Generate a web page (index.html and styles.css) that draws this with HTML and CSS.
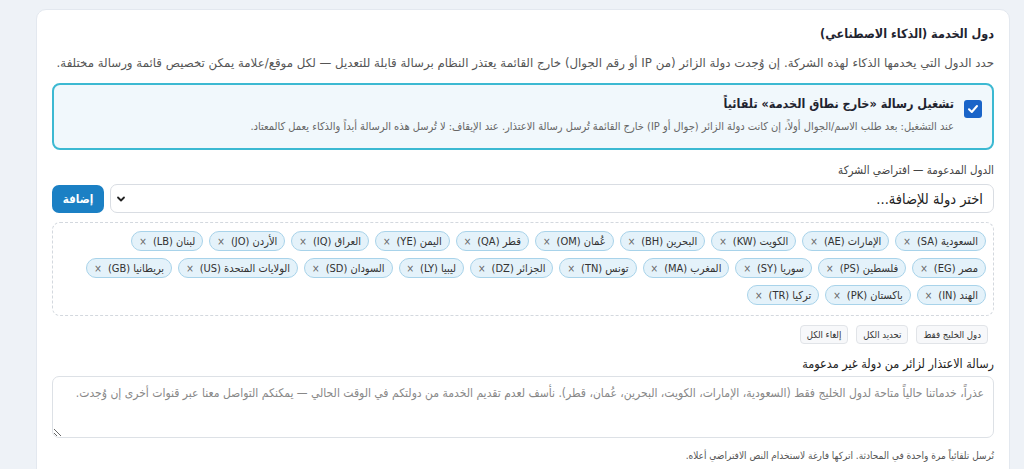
FILE: index.html
```html
<!DOCTYPE html>
<html lang="ar" dir="rtl">
<head>
    <meta charset="UTF-8">
    <meta name="viewport" content="width=device-width, initial-scale=1.0">
    <title>دول الخدمة</title>
    <link rel="stylesheet" href="styles.css">
</head>
<body>
    <div class="card">
        <h2>دول الخدمة (الذكاء الاصطناعي)</h2>
        <p class="desc">حدد الدول التي يخدمها الذكاء لهذه الشركة. إن وُجدت دولة الزائر (من IP أو رقم الجوال) خارج القائمة يعتذر النظام برسالة قابلة للتعديل — لكل موقع/علامة يمكن تخصيص قائمة ورسالة مختلفة.</p>

        <div class="toggle-box">
            <span class="check">
                <svg width="12" height="12" viewBox="0 0 12 12"><path d="M2 6.3 L4.8 9 L10 3" fill="none" stroke="#fff" stroke-width="2" stroke-linecap="round" stroke-linejoin="round"/></svg>
            </span>
            <div>
                <div class="toggle-title">تشغيل رسالة «خارج نطاق الخدمة» تلقائياً</div>
                <div class="toggle-sub">عند التشغيل: بعد طلب الاسم/الجوال أولاً، إن كانت دولة الزائر (جوال أو IP) خارج القائمة تُرسل رسالة الاعتذار. عند الإيقاف: لا تُرسل هذه الرسالة أبداً والذكاء يعمل كالمعتاد.</div>
            </div>
        </div>

        <div class="label">الدول المدعومة — افتراضي الشركة</div>
        <div class="add-row">
            <div class="select">
                <span>اختر دولة للإضافة...</span>
                <svg width="10" height="10" viewBox="0 0 10 10"><path d="M2 3.5 L5 6.5 L8 3.5" fill="none" stroke="#222" stroke-width="1.8" stroke-linecap="round" stroke-linejoin="round"/></svg>
            </div>
            <button class="btn-add">إضافة</button>
        </div>

        <div class="chips" id="chips"></div>

        <div class="quick">
            <button>دول الخليج فقط</button>
            <button>تحديد الكل</button>
            <button>إلغاء الكل</button>
        </div>

        <div class="label dark">رسالة الاعتذار لزائر من دولة غير مدعومة</div>
        <textarea placeholder="عذراً، خدماتنا حالياً متاحة لدول الخليج فقط (السعودية، الإمارات، الكويت، البحرين، عُمان، قطر). نأسف لعدم تقديم الخدمة من دولتكم في الوقت الحالي — يمكنكم التواصل معنا عبر قنوات أخرى إن وُجدت."></textarea>
        <p class="hint">تُرسل تلقائياً مرة واحدة في المحادثة. اتركها فارغة لاستخدام النص الافتراضي أعلاه.</p>
    </div>

    <script>
        const countries = [
            ['السعودية', 'SA'], ['الإمارات', 'AE'], ['الكويت', 'KW'], ['البحرين', 'BH'],
            ['عُمان', 'OM'], ['قطر', 'QA'], ['اليمن', 'YE'], ['العراق', 'IQ'],
            ['الأردن', 'JO'], ['لبنان', 'LB'], ['مصر', 'EG'], ['فلسطين', 'PS'],
            ['سوريا', 'SY'], ['المغرب', 'MA'], ['تونس', 'TN'], ['الجزائر', 'DZ'],
            ['ليبيا', 'LY'], ['السودان', 'SD'], ['الولايات المتحدة', 'US'], ['بريطانيا', 'GB'],
            ['الهند', 'IN'], ['باكستان', 'PK'], ['تركيا', 'TR']
        ];
        const chipsDiv = document.getElementById('chips');
        countries.forEach(([name, code]) => {
            const chip = document.createElement('span');
            chip.className = 'chip';
            chip.innerHTML = `<span>${name} (${code})</span><span class="x">×</span>`;
            chipsDiv.appendChild(chip);
        });
    </script>
</body>
</html>
```

FILE: styles.css
```css
body {
    margin: 0;
    padding: 9px 14px 0 36px;
    background-color: #eef2f7;
    font-family: "DejaVu Sans Condensed", "DejaVu Sans", sans-serif;
    color: #222;
}

.card {
    background-color: #fff;
    border: 1px solid #e3e8ef;
    border-radius: 10px;
    padding: 14px 15px 20px;
}

h2 {
    margin: 0;
    font-size: 12.5px;
    line-height: 20px;
    font-weight: 700;
    color: #1f2430;
}

.desc {
    margin: 11px 0 12px;
    font-family: "DejaVu Sans", sans-serif;
    font-size: 11.8px;
    line-height: 16px;
    color: #555;
}

.toggle-box {
    display: flex;
    align-items: flex-start;
    gap: 10px;
    border: 2px solid #3cb9d2;
    border-radius: 8px;
    background-color: #f1f8fc;
    padding: 9px 10px 13px;
}

.check {
    width: 18px;
    height: 18px;
    margin-top: 6px;
    border-radius: 3px;
    background-color: #1a64c8;
    display: flex;
    align-items: center;
    justify-content: center;
    flex-shrink: 0;
}

.toggle-title {
    font-size: 12.5px;
    line-height: 20px;
    font-weight: 700;
    color: #1f2430;
}

.toggle-sub {
    margin-top: 5px;
    font-size: 11px;
    line-height: 16px;
    color: #666;
}

.label {
    margin: 12px 0 6px;
    font-size: 11.5px;
    line-height: 16px;
    color: #444;
}

.label.dark {
    margin: 12px 0 4px;
    font-size: 12.5px;
    color: #222;
}

.add-row {
    display: flex;
    gap: 6px;
    align-items: center;
}

.select {
    flex: 1;
    height: 29px;
    box-sizing: border-box;
    border: 1px solid #d9dde3;
    border-radius: 7px;
    display: flex;
    align-items: center;
    justify-content: space-between;
    padding: 0 10px 0 5px;
    font-size: 14.5px;
    color: #222;
}

.btn-add {
    width: 52px;
    height: 28px;
    border: none;
    border-radius: 7px;
    background-color: #1b80c4;
    color: #fff;
    font-family: inherit;
    font-size: 11.5px;
    font-weight: 700;
}

.chips {
    margin-top: 9px;
    border: 1px dashed #d3d8de;
    border-radius: 8px;
    padding: 8px 7px;
    min-height: 76px;
    display: flex;
    flex-wrap: wrap;
    align-content: flex-start;
    gap: 7px 6px;
}

.chip {
    display: inline-flex;
    align-items: center;
    gap: 6px;
    height: 20px;
    box-sizing: border-box;
    padding: 0 7px;
    border: 1px solid #a8d3ea;
    border-radius: 11px;
    background-color: #e4f2fa;
    font-size: 11px;
    color: #333;
}

.chip .x {
    font-size: 10px;
    color: #666;
}

.quick {
    display: flex;
    gap: 8px;
    margin-top: 9px;
    padding-right: 6px;
}

.quick button {
    height: 19px;
    padding: 0 6px;
    border: 1px solid #e1e4e8;
    border-radius: 4px;
    background-color: #f7f8fa;
    font-family: inherit;
    font-size: 9.5px;
    color: #333;
}

textarea {
    display: block;
    width: 100%;
    height: 62px;
    box-sizing: border-box;
    border: 1px solid #dde1e6;
    border-radius: 7px;
    padding: 8px 9px;
    font-family: inherit;
    font-size: 12px;
    line-height: 16px;
    resize: vertical;
}

textarea::placeholder {
    color: #888;
}

.hint {
    margin: 11px 0 0;
    font-size: 10px;
    line-height: 14px;
    color: #555;
}
```
